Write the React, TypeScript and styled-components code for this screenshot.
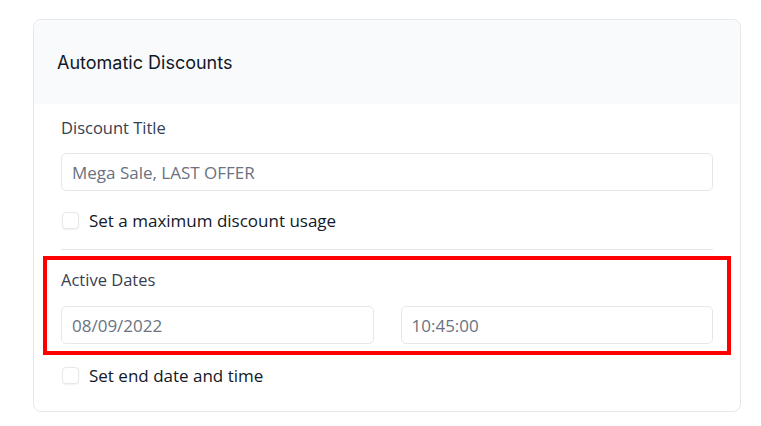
import React from "react";
import styled, { createGlobalStyle } from "styled-components";

const GlobalStyle = createGlobalStyle`
  body {
    margin: 0;
    background: #ffffff;
    font-family: "Open Sans", "Noto Sans", sans-serif;
  }
`;

const Page = styled.div`
  padding: 19px 0 0 33px;
`;

const Card = styled.div`
  width: 706px;
  border: 1px solid #e5e7eb;
  border-radius: 8px;
  overflow: hidden;
  background: #ffffff;
`;

const CardHeader = styled.div`
  height: 84px;
  display: flex;
  align-items: center;
  padding: 0 23px;
  background: #f9fafb;
`;

const Title = styled.h2`
  margin: 0;
  font-family: Inter, "Noto Sans", sans-serif;
  font-size: 18px;
  font-weight: 400;
  color: #111827;
`;

const CardBody = styled.div`
  padding: 14px 27px 26px 27px;
`;

const Label = styled.label`
  display: block;
  font-size: 16.5px;
  line-height: 20px;
  color: #374151;
`;

const TextInput = styled.input`
  box-sizing: border-box;
  width: 100%;
  height: 38px;
  margin-top: 15px;
  padding: 0 10px;
  border: 1px solid #e5e7eb;
  border-radius: 5px;
  font-family: "Open Sans", "Noto Sans", sans-serif;
  font-size: 17px;
  color: #6b7280;
  background: #ffffff;
  outline: none;
  &::placeholder {
    color: #6b7280;
  }
`;

const CheckRow = styled.label<{ $top: number }>`
  display: flex;
  align-items: center;
  gap: 10px;
  height: 20px;
  margin-top: ${(p) => p.$top}px;
  font-size: 17px;
  color: #111827;
`;

const Box = styled.span`
  box-sizing: border-box;
  width: 17px;
  height: 17px;
  margin-left: 1px;
  border: 1px solid #e5e7eb;
  border-radius: 4px;
  background: #ffffff;
  box-shadow: 0 1px 2px rgba(0, 0, 0, 0.06);
`;

const Divider = styled.hr`
  margin: 19px 0 6px;
  border: 0;
  border-top: 1px solid #e5e7eb;
`;

const Highlight = styled.section`
  margin: 0 -18px;
  padding: 10px 14px 7px;
  border: 4px solid #ff0000;
`;

const DateGrid = styled.div`
  display: grid;
  grid-template-columns: 1fr 1fr;
  column-gap: 27px;
  margin-top: 16px;
  & > input {
    margin-top: 0;
  }
`;

export default function App() {
  return (
    <Page>
      <GlobalStyle />
      <Card>
        <CardHeader>
          <Title>Automatic Discounts</Title>
        </CardHeader>
        <CardBody>
          <Label>Discount Title</Label>
          <TextInput placeholder="Mega Sale, LAST OFFER" />
          <CheckRow $top={19}>
            <Box />
            Set a maximum discount usage
          </CheckRow>
          <Divider />
          <Highlight>
            <Label>Active Dates</Label>
            <DateGrid>
              <TextInput defaultValue="08/09/2022" />
              <TextInput defaultValue="10:45:00" />
            </DateGrid>
          </Highlight>
          <CheckRow $top={10}>
            <Box />
            Set end date and time
          </CheckRow>
        </CardBody>
      </Card>
    </Page>
  );
}
